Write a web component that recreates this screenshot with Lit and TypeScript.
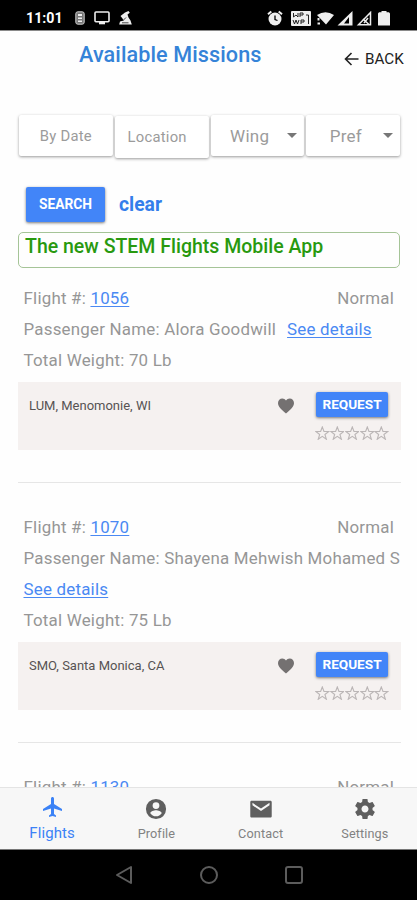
import { LitElement, html, svg, css, nothing } from "lit";
import { customElement, property } from "lit/decorators.js";

interface Mission {
  id: string;
  passenger: string;
  weight: string;
  place: string;
}

const missions: Mission[] = [
  { id: "1056", passenger: "Alora Goodwill", weight: "70 Lb", place: "LUM, Menomonie, WI" },
  { id: "1070", passenger: "Shayena Mehwish Mohamed S", weight: "75 Lb", place: "SMO, Santa Monica, CA" },
  { id: "1130", passenger: "", weight: "", place: "" },
];

const star = svg`<path d="M12 3.2l2.3 6.3h6.6l-5.3 4 2 6.6-5.6-4-5.6 4 2-6.6-5.3-4h6.6z" fill="none" stroke="#bbb6b6" stroke-width="1.500"/>`;

const tabIcons: Record<string, unknown> = {
  Flights: svg`<path d="M21 16v-2l-8-5V3.500c0-.83-.67-1.500-1.500-1.500S10 2.670 10 3.500V9l-8 5v2l8-2.500V19l-2 1.500V22l3.500-1 3.500 1v-1.500L13 19v-5.500l8 2.500z"/>`,
  Profile: svg`<path fill-rule="evenodd" d="M12 1a11 11 0 1 0 0 22 11 11 0 0 0 0-22zm0 3.500a3.700 3.700 0 1 1 0 7.400 3.700 3.700 0 0 1 0-7.400zm0 15.400a7.400 7.400 0 0 1-6.200-3.400c0-2.100 4.100-3.200 6.200-3.200s6.200 1.100 6.200 3.200A7.400 7.400 0 0 1 12 19.900z"/>`,
  Contact: svg`<path d="M22.300 3H1.700C.9 3 .3 3.700.3 4.500v15.300c0 .8.600 1.500 1.400 1.500h20.600c.8 0 1.400-.7 1.400-1.500V4.500c0-.8-.6-1.500-1.400-1.500zM21.300 8L12 14.200 2.700 8V5.300L12 11.500l9.300-6.200z"/>`,
  Settings: svg`<path transform="translate(-1.200 -1.200) scale(1.100)" d="M19.430 12.980c.04-.32.07-.64.07-.98s-.03-.66-.07-.98l2.110-1.650c.19-.15.24-.42.12-.64l-2-3.460c-.12-.22-.39-.3-.61-.22l-2.490 1c-.52-.4-1.080-.73-1.690-.98l-.38-2.650C14.460 2.180 14.250 2 14 2h-4c-.25 0-.46.18-.49.42l-.38 2.650c-.61.25-1.170.59-1.690.98l-2.490-1c-.23-.09-.49 0-.61.22l-2 3.460c-.13.22-.07.49.12.64l2.110 1.650c-.04.32-.07.65-.07.98s.03.66.07.98l-2.110 1.650c-.19.15-.24.42-.12.64l2 3.460c.12.22.39.3.61.22l2.490-1c.52.4 1.080.73 1.690.98l.38 2.650c.03.24.24.42.49.42h4c.25 0 .46-.18.49-.42l.38-2.650c.61-.25 1.170-.59 1.690-.98l2.490 1c.23.09.49 0 .61-.22l2-3.460c.12-.22.07-.49-.12-.64l-2.110-1.650zM12 15.500c-1.930 0-3.500-1.570-3.500-3.500s1.570-3.500 3.500-3.500 3.500 1.570 3.500 3.500-1.570 3.500-3.500 3.500z"/>`,
};

@customElement("status-bar")
class StatusBar extends LitElement {
  static styles = css`
    :host { display: flex; height: 30px; flex: none; background: #000; border-bottom: 1px solid #8a8a8a; box-sizing: content-box; }
    .bar { display: flex; flex: 1; align-items: center; padding: 6px 27px 0 26px; color: #fff; }
    .time { font: 700 14.2px Roboto, sans-serif; width: 49px; }
    .left, .right { display: flex; align-items: center; fill: #eee; }
    .left { flex: 1; }
    svg { display: block; flex: none; }
    .phone { margin-right: 9px; }
    .cast { margin-right: 9px; }
    .right { gap: 3px; }
    .alarm { margin-right: 5px; }
    .lte { margin-right: 3px; }
    .battery { margin-left: 3px; }
  `;
  render() {
    return html`<div class="bar">
      <span class="time">11:01</span>
      <div class="left">
        <svg class="phone" width="10" height="14" viewBox="0 0 10 14"><rect x=".8" y=".8" width="8.400" height="12.400" rx="2" fill="#777" stroke="#ccc"/><path d="M3 3h4v2H3zM3 6.500h4v1.500H3zM3 9.500h4V11H3z"/></svg>
        <svg class="cast" width="16" height="14" viewBox="0 0 16 14"><rect x="1" y="1" width="14" height="9.800" rx="1" fill="none" stroke="#eee" stroke-width="1.600"/><path d="M5 11h6v2.300H5z"/></svg>
        <svg width="13" height="14" viewBox="0 0 13 14"><path d="M1.500 5L6 1.500 9.500 0l1.300 1.800L8.500 3.500l1 3 2 3 1.300 4H.2L1 10.500l3.500-1-1-2z"/><path d="M3.500 10L7 6.500M3 11.800h6.500" stroke="#000" fill="none" stroke-width=".7"/></svg>
      </div>
      <div class="right">
        <svg class="alarm" width="16" height="16" viewBox="0 0 16 16"><circle cx="8" cy="9" r="6.500"/><path d="M1 4.200L4.300 1.400M15 4.200l-3.300-2.800" stroke="#eee" stroke-width="2"/><path d="M8 5.500v4l2.500 1" stroke="#000" fill="none" stroke-width="1.300"/></svg>
        <svg class="lte" width="20" height="15" viewBox="0 0 20 15"><rect width="20" height="15" rx="1"/><path d="M2.500 2v4l2.500-2 2 2V2M9 6V2h3v2H9M2 9l1.500 4L5 9l1.500 4L8 9M10 13V9h3v2h-3M15 4h2.500v9" stroke="#222" fill="none"/></svg>
        <svg width="17" height="15" viewBox="0 0 17 15"><path d="M0 4Q8.500-1.500 17 4L9 13.500zM.5 7h2v2.500h-2zM.5 11.500H3v2H.5z"/></svg>
        <svg width="16" height="15" viewBox="0 0 16 15"><path fill-rule="evenodd" d="M15.500 0v14.500H.5zM12 6v6.500H7z"/></svg>
        <svg width="16" height="15" viewBox="0 0 16 15"><path d="M14.500 1.500v12.200H2.500z" fill="none" stroke="#eee" stroke-width="1.500"/><path d="M7 8l6 5.500M12 7l-4 5" stroke="#eee" stroke-width="1.500"/></svg>
        <svg class="battery" width="12" height="15" viewBox="0 0 12 15"><path d="M3.500 0h5v1.300H11L12 2.500v12H0v-12l1-1.200h2.500z"/></svg>
      </div>
    </div>`;
  }
}

@customElement("mission-card")
class MissionCard extends LitElement {
  @property({ attribute: false }) mission!: Mission;
  static styles = css`
    :host { display: block; flex: none; font-size: 16.9px; letter-spacing: 0.22px; color: #969696; }
    .line { height: 31.2px; line-height: 31.2px; padding: 0 7px 0 5.500px; white-space: nowrap; }
    .head { display: flex; justify-content: space-between; }
    .name { display: flex; flex-wrap: wrap; column-gap: 11px; padding-right: 0; height: auto; }
    a { color: #4a89f3; text-decoration: underline; text-decoration-thickness: 1px; text-underline-offset: 2px; }
    .strip { display: flex; height: 68px; margin-top: 5.400px; background: #f5f1f0; box-sizing: border-box; padding: 10px 13px 0 11px; }
    .place { flex: 1; font-size: 13px; letter-spacing: 0; line-height: 27px; color: #575353; }
    .heart { display: block; margin: 4px 20px 0 0; fill: #747171; }
    .request { width: 72px; height: 25px; border-radius: 2px; background: #4285f8; color: #fff; font: 700 13.600px/24px Roboto, sans-serif; letter-spacing: 0; text-align: center; box-shadow: 0 1px 3px #777; }
    .stars { display: flex; justify-content: space-between; margin: 9px -1px 0 -1px; }
    .stars svg { display: block; width: 14.600px; height: 14px; }
    .rule { height: 1px; background: #e6e6e6; margin: 32.500px 0 28.300px; }
  `;
  render() {
    const m = this.mission;
    return html`
      <div class="line head"><span>Flight #: <a>${m.id}</a></span><span>Normal</span></div>
      ${m.passenger
        ? html`
            <div class="line name"><span>Passenger Name: ${m.passenger}</span><a>See details</a></div>
            <div class="line">Total Weight: ${m.weight}</div>
            <div class="strip">
              <span class="place">${m.place}</span>
              <svg class="heart" width="20" height="19" viewBox="0 0 20 19"><path d="M10 17.500C5 13.300 2 10.600 2 7c0-2.900 2-4.600 4.300-4.600 1.500 0 2.900.8 3.700 2 .8-1.200 2.200-2 3.700-2C16 2.400 18 4.100 18 7c0 3.600-3 6.300-8 10.500z"/></svg>
              <div>
                <div class="request">REQUEST</div>
                <div class="stars">${[1, 2, 3, 4, 5].map(() => html`<svg viewBox="2 2 20 19">${star}</svg>`)}</div>
              </div>
            </div>
            <div class="rule"></div>`
        : nothing}
    `;
  }
}

@customElement("app-root")
class AppRoot extends LitElement {
  static styles = css`
    :host { display: flex; flex-direction: column; width: 417px; height: 900px; overflow: hidden; background: #fefefe; font-family: Roboto, sans-serif; box-sizing: border-box; }
    header { display: grid; grid-template-columns: 79px 1fr 73px; height: 84px; flex: none; }
    .title { grid-column: 2; font-size: 21.6px; font-weight: 500; line-height: 26px; margin-top: 11px; color: #3583d8; white-space: nowrap; letter-spacing: 0.1px; }
    .back { display: flex; align-items: center; gap: 6px; height: 20px; margin-top: 18px; font-size: 15.200px; color: #222; }
    .filters { display: grid; grid-template-columns: repeat(4, 1fr); gap: 2px; padding: 0 17px 0 19px; height: 72px; flex: none; align-items: start; }
    .filter { display: flex; align-items: center; justify-content: center; box-sizing: border-box; height: 41px; background: #fff; border-radius: 2px; box-shadow: 0 1px 3px #999; color: #9b9b9b; font-size: 14.800px; letter-spacing: 0.25px; }
    .filter.tall { height: 42px; margin-top: 1px; padding-right: 9px; }
    .filter.select { font-size: 17px; justify-content: flex-end; padding-right: 7px; }
    .caret { width: 0; border: 5px solid transparent; border-top-color: #777; border-bottom: 0; }
    .wing .caret { margin-left: 18px; }
    .pref .caret { margin-left: 21px; }
    .actions { display: flex; gap: 14px; align-items: center; padding-left: 26px; height: 35px; flex: none; }
    .search { width: 79px; height: 35px; border-radius: 2px; background: #4285f8; box-shadow: 0 1px 3px #777; color: #fff; font: 700 13.800px/34px Roboto, sans-serif; text-align: center; }
    .clear { color: #347eeb; font-size: 19.300px; font-weight: 700; line-height: 34px; }
    .banner { flex: none; box-sizing: border-box; height: 36px; margin: 10px 17px 0 18px; border: 1px solid #a5c497; border-radius: 5px; padding-left: 6px; font-size: 19.500px; font-weight: 500; line-height: 27px; color: #28990f; white-space: nowrap; }
    .list { flex: 1; min-height: 0; overflow: hidden; display: flex; flex-direction: column; padding: 15px 16px 0 18px; }
    .tabs { display: flex; flex: none; height: 61px; background: #f7f7f7; border-top: 1px solid #e4e4e4; }
    .tab { flex: 1; display: flex; flex-direction: column; align-items: center; color: #828282; font-size: 12.700px; letter-spacing: 0.1px; }
    .tab svg { width: 22px; height: 22px; margin-top: 10px; fill: #5f5f5f; }
    .tab span { line-height: 18px; margin-top: 5px; }
    .tab.on { color: #3b82f6; font-size: 15px; }
    .tab.on svg { fill: #3b82f6; width: 24px; height: 24px; margin: 7px 0 0 2px; }
    .tab.on span { margin-top: 5px; }
    .nav { flex: none; height: 51px; box-sizing: border-box; background: #000; border-top: 1px solid #777; display: flex; align-items: center; justify-content: center; gap: 65px; padding-left: 2px; }
    .nav svg { display: block; fill: none; stroke: #5c5c5c; stroke-width: 2; }
  `;
  render() {
    return html`
      <status-bar></status-bar>
      <header>
        <div class="title">Available Missions</div>
        <div class="back"><svg width="15" height="14" viewBox="0 0 15 14" fill="none" stroke="#222" stroke-width="1.600"><path d="M14.500 7H1.500M7.500 1L1.500 7l6 6"/></svg>BACK</div>
      </header>
      <div class="filters">
        <div class="filter">By Date</div>
        <div class="filter tall">Location</div>
        <div class="filter select wing">Wing<i class="caret"></i></div>
        <div class="filter select pref">Pref<i class="caret"></i></div>
      </div>
      <div class="actions"><div class="search">SEARCH</div><span class="clear">clear</span></div>
      <div class="banner">The new STEM Flights Mobile App</div>
      <div class="list">${missions.map((m) => html`<mission-card .mission=${m}></mission-card>`)}</div>
      <div class="tabs">
        ${Object.entries(tabIcons).map(
          ([name, icon], i) => html`<div class="tab ${i === 0 ? "on" : ""}"><svg viewBox="0 0 24 24">${icon}</svg><span>${name}</span></div>`
        )}
      </div>
      <div class="nav">
        <svg width="19" height="20" viewBox="0 0 19 20"><path d="M16 2v16L2 10z" stroke-linejoin="round"/></svg>
        <svg width="20" height="20" viewBox="0 0 20 20"><circle cx="10" cy="10" r="8"/></svg>
        <svg width="20" height="20" viewBox="0 0 20 20"><rect x="2" y="2" width="16" height="16" rx="2"/></svg>
      </div>
    `;
  }
}
